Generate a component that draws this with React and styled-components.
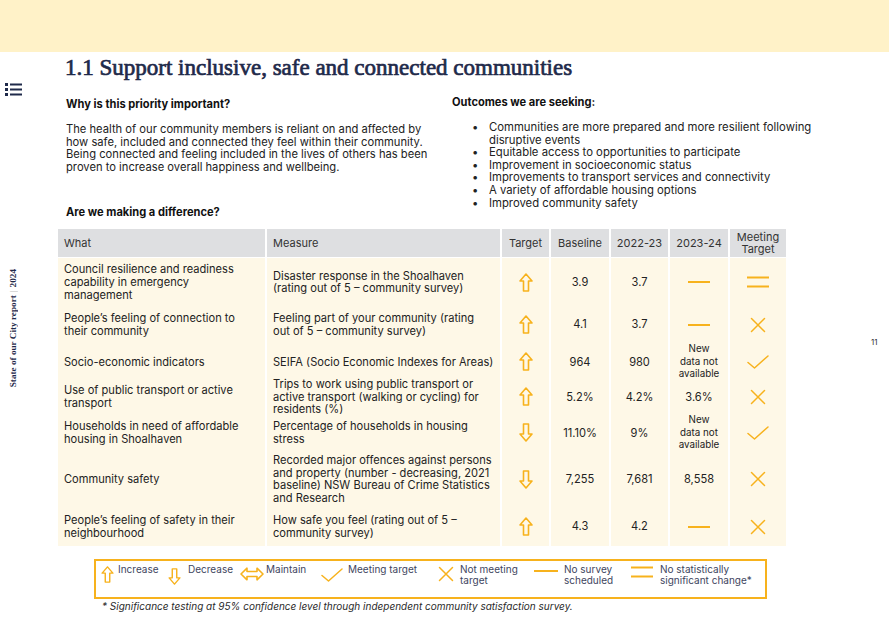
import React from 'react'
import styled, { createGlobalStyle } from 'styled-components'

const ORANGE = '#f7b21d'
const NAVY = '#1f2a4a'

const GlobalStyle = createGlobalStyle`
  body {
    margin: 0;
    background: #fff;
    font-family: Inter, 'Noto Sans', sans-serif;
    color: #222;
  }
`

const Page = styled.div`
  width: 889px;
  height: 628px;
  overflow: hidden;
  display: flex;
  flex-direction: column;
`

const Banner = styled.div`
  height: 52px;
  background: #fff2c8;
  flex-shrink: 0;
`

const Body = styled.div`
  display: grid;
  grid-template-columns: 58px 728px 1fr;
`

const Sidebar = styled.div`
  display: flex;
  flex-direction: column;
  align-items: flex-start;
  padding: 30px 0 0 5px;
`

const SideText = styled.div`
  writing-mode: vertical-rl;
  transform: rotate(180deg);
  margin-top: 172px;
  margin-left: 3px;
  font-family: 'Liberation Serif', serif;
  font-weight: 700;
  font-size: 9.2px;
  color: ${NAVY};
  white-space: nowrap;

  & > .sep {
    color: #b8b8b8;
    font-weight: 400;
    margin: 3px 0;
  }
`

const Aside = styled.div`
  padding: 285px 0 0 85px;
  font-size: 8px;
  color: #333;
`

const Main = styled.div`
  display: flex;
  flex-direction: column;
`

const Title = styled.h1`
  margin: 4px 0 0 7px;
  font-family: 'Liberation Serif', serif;
  font-weight: 400;
  font-size: 23px;
  line-height: 1;
  color: ${NAVY};
  -webkit-text-stroke: 0.7px ${NAVY};
`

const Intro = styled.div`
  display: grid;
  grid-template-columns: 394px 1fr;
  margin-top: 17px;
`

const Col = styled.div`
  padding-left: ${p => p.$left}px;
  padding-top: ${p => p.$top}px;
`

const Heading = styled.div`
  font-weight: 700;
  font-size: 11.1px;
  line-height: 13px;
  color: #111;
  margin-top: ${p => p.$mt || 0}px;
`

const Para = styled.p`
  margin: 12px 0 0;
  font-size: 11.2px;
  line-height: 12.7px;
  color: #222;
  white-space: nowrap;
`

const Bullets = styled.ul`
  list-style: none;
  margin: 12px 0 0;
  padding: 0 0 0 20px;
  font-size: 11.3px;
  line-height: 12.6px;
  color: #222;
  white-space: nowrap;
`

const Bullet = styled.li`
  display: flex;

  &::before {
    content: '•';
    width: 17px;
    flex-shrink: 0;
  }
`

const Table = styled.div`
  margin-top: 10px;
  display: flex;
  flex-direction: column;
  background: #fff;
`

const Row = styled.div`
  display: grid;
  grid-template-columns: 207px 233px 47px 58px 57px 58px 56px;
  column-gap: 2px;
  height: ${p => p.$h}px;
  margin-bottom: ${p => (p.$head ? 1 : 0)}px;
`

const HeadCell = styled.div`
  background: #dedfe1;
  display: flex;
  align-items: center;
  justify-content: ${p => (p.$center ? 'center' : 'flex-start')};
  text-align: ${p => (p.$center ? 'center' : 'left')};
  padding: 0 ${p => (p.$center ? 1 : 6)}px;
  font-size: 11px;
  line-height: 12px;
  color: #333;
  white-space: pre;
`

const Cell = styled.div`
  background: #fef8e7;
  display: flex;
  align-items: center;
  justify-content: ${p => (p.$center ? 'center' : 'flex-start')};
  text-align: ${p => (p.$center ? 'center' : 'left')};
  padding: 0 ${p => (p.$center ? 1 : 6)}px;
  font-size: ${p => (p.$small ? 9.8 : 11.1)}px;
  line-height: 12.7px;
  color: #222;
  white-space: pre;
`

const Legend = styled.div`
  margin: 13px 0 0 36px;
  width: 673px;
  height: 40px;
  box-sizing: border-box;
  border: 2px solid ${ORANGE};
  display: grid;
  grid-template-columns: 67px 73px 81px 117px 96px 97px 1fr;
  align-items: start;
  padding: 3px 0 0 4px;
`

const LegendItem = styled.div`
  display: flex;
  align-items: flex-start;
  gap: ${p => p.$gap || 3}px;
  font-size: 10px;
  line-height: 11px;
  color: #3e4560;
  white-space: pre;

  & > svg {
    flex-shrink: 0;
    margin-top: ${p => p.$iconTop || 0}px;
  }
`

const Footnote = styled.div`
  margin: 1px 0 0 44px;
  font-size: 10px;
  line-height: 12px;
  font-style: italic;
  color: #2a2a2a;
`

const stroke = { fill: 'none', stroke: ORANGE, strokeWidth: 1.6, strokeLinejoin: 'round', strokeLinecap: 'round' }

const ArrowUp = ({ w = 14, h = 19 }) => (
  <svg width={w} height={h} viewBox="0 0 14 19">
    <path d="M7 1 L13 8 L9.5 8 L9.5 18 L4.5 18 L4.5 8 L1 8 Z" {...stroke} />
  </svg>
)

const ArrowDown = ({ w = 14, h = 19 }) => (
  <svg width={w} height={h} viewBox="0 0 14 19">
    <path d="M7 18 L13 11 L9.5 11 L9.5 1 L4.5 1 L4.5 11 L1 11 Z" {...stroke} />
  </svg>
)

const ArrowBoth = () => (
  <svg width="24" height="14" viewBox="0 0 24 14">
    <path d="M1 7 L7 1.2 L7 4.5 L17 4.5 L17 1.2 L23 7 L17 12.8 L17 9.5 L7 9.5 L7 12.8 Z" {...stroke} />
  </svg>
)

const Dash = ({ w = 22 }) => (
  <svg width={w} height="4" viewBox={`0 0 ${w} 4`}>
    <line x1="0" y1="2" x2={w} y2="2" stroke={ORANGE} strokeWidth="2" />
  </svg>
)

const Equal = () => (
  <svg width="22" height="12" viewBox="0 0 22 12">
    <line x1="0" y1="1.5" x2="22" y2="1.5" stroke={ORANGE} strokeWidth="2" />
    <line x1="0" y1="10.5" x2="22" y2="10.5" stroke={ORANGE} strokeWidth="2" />
  </svg>
)

const Cross = () => (
  <svg width="16" height="16" viewBox="0 0 16 16">
    <path d="M1.5 1.5 L14.5 14.5 M14.5 1.5 L1.5 14.5" {...stroke} strokeWidth="1.5" />
  </svg>
)

const Check = () => (
  <svg width="22" height="14" viewBox="0 0 22 14">
    <path d="M1 7.5 L7.5 13 L21 1" {...stroke} strokeWidth="1.5" />
  </svg>
)

const ListIcon = () => (
  <svg width="17" height="15" viewBox="0 0 17 15">
    <g fill={NAVY}>
      <rect x="0" y="1" width="3" height="3" />
      <rect x="5" y="1.5" width="12" height="2" />
      <rect x="0" y="6" width="3" height="3" />
      <rect x="5" y="6.5" width="12" height="2" />
      <rect x="0" y="11" width="3" height="3" />
      <rect x="5" y="11.5" width="12" height="2" />
    </g>
  </svg>
)

const icons = {
  up: <ArrowUp />,
  down: <ArrowDown />,
  dash: <Dash />,
  equal: <Equal />,
  cross: <Cross />,
  check: <Check />,
}

const NA = 'New\ndata not\navailable'

const rows = [
  {
    h: 49,
    what: 'Council resilience and readiness\ncapability in emergency\nmanagement',
    measure: 'Disaster response in the Shoalhaven\n(rating out of 5 – community survey)',
    target: 'up', base: '3.9', y22: '3.7', y23: 'dash', meet: 'equal',
  },
  {
    h: 36,
    what: 'People’s feeling of connection to\ntheir community',
    measure: 'Feeling part of your community (rating\nout of 5 – community survey)',
    target: 'up', base: '4.1', y22: '3.7', y23: 'dash', meet: 'cross',
  },
  {
    h: 35,
    what: 'Socio-economic indicators',
    measure: 'SEIFA (Socio Economic Indexes for Areas)',
    target: 'up', base: '964', y22: '980', y23: NA, meet: 'check',
  },
  {
    h: 36,
    what: 'Use of public transport or active\ntransport',
    measure: 'Trips to work using public transport or\nactive transport (walking or cycling) for\nresidents (%)',
    target: 'up', base: '5.2%', y22: '4.2%', y23: '3.6%', meet: 'cross',
  },
  {
    h: 37,
    what: 'Households in need of affordable\nhousing in Shoalhaven',
    measure: 'Percentage of households in housing\nstress',
    target: 'down', base: '11.10%', y22: '9%', y23: NA, meet: 'check',
  },
  {
    h: 57,
    what: 'Community safety',
    measure: 'Recorded major offences against persons\nand property (number - decreasing, 2021\nbaseline) NSW Bureau of Crime Statistics\nand Research',
    target: 'down', base: '7,255', y22: '7,681', y23: '8,558', meet: 'cross',
  },
  {
    h: 38,
    what: 'People’s feeling of safety in their\nneighbourhood',
    measure: 'How safe you feel (rating out of 5 –\ncommunity survey)',
    target: 'up', base: '4.3', y22: '4.2', y23: 'dash', meet: 'cross',
  },
]

const outcomes = [
  <>Communities are more prepared and more resilient following<br />disruptive events</>,
  'Equitable access to opportunities to participate',
  'Improvement in socioeconomic status',
  'Improvements to transport services and connectivity',
  'A variety of affordable housing options',
  'Improved community safety',
]

const value = v => icons[v] || v

export default function App() {
  return (
    <Page>
      <GlobalStyle />
      <Banner />
      <Body>
        <Sidebar>
          <ListIcon />
          <SideText>
            State of our City report<span className="sep">|</span>2024
          </SideText>
        </Sidebar>

        <Main>
          <Title>1.1 Support inclusive, safe and connected communities</Title>

          <Intro>
            <Col $left={8} $top={2}>
              <Heading>Why is this priority important?</Heading>
              <Para>
                The health of our community members is reliant on and affected by<br />
                how safe, included and connected they feel within their community.<br />
                Being connected and feeling included in the lives of others has been<br />
                proven to increase overall happiness and wellbeing.
              </Para>
              <Heading $mt={32}>Are we making a difference?</Heading>
            </Col>
            <Col $left={0} $top={0}>
              <Heading>Outcomes we are seeking:</Heading>
              <Bullets>
                {outcomes.map((o, i) => (
                  <Bullet key={i}>
                    <span>{o}</span>
                  </Bullet>
                ))}
              </Bullets>
            </Col>
          </Intro>

          <Table>
            <Row $h={28} $head>
              <HeadCell>What</HeadCell>
              <HeadCell>Measure</HeadCell>
              <HeadCell $center>Target</HeadCell>
              <HeadCell $center>Baseline</HeadCell>
              <HeadCell $center>2022-23</HeadCell>
              <HeadCell $center>2023-24</HeadCell>
              <HeadCell $center>{'Meeting\nTarget'}</HeadCell>
            </Row>
            {rows.map(r => (
              <Row key={r.what} $h={r.h}>
                <Cell>{r.what}</Cell>
                <Cell>{r.measure}</Cell>
                <Cell $center>{value(r.target)}</Cell>
                <Cell $center>{r.base}</Cell>
                <Cell $center>{r.y22}</Cell>
                <Cell $center $small={r.y23 === NA}>{value(r.y23)}</Cell>
                <Cell $center>{value(r.meet)}</Cell>
              </Row>
            ))}
          </Table>

          <Legend>
            <LegendItem $iconTop={2}>
              <ArrowUp w={15} h={17} />
              Increase
            </LegendItem>
            <LegendItem $gap={6} $iconTop={4}>
              <ArrowDown w={15} h={17} />
              Decrease
            </LegendItem>
            <LegendItem $gap={2} $iconTop={3}>
              <ArrowBoth />
              Maintain
            </LegendItem>
            <LegendItem $gap={5} $iconTop={4}>
              <Check />
              Meeting target
            </LegendItem>
            <LegendItem $gap={6} $iconTop={2}>
              <Cross />
              {'Not meeting\ntarget'}
            </LegendItem>
            <LegendItem $gap={6} $iconTop={5}>
              <Dash w={24} />
              {'No survey\nscheduled'}
            </LegendItem>
            <LegendItem $gap={7} $iconTop={2}>
              <Equal />
              {'No statistically\nsignificant change*'}
            </LegendItem>
          </Legend>
          <Footnote>
            * Significance testing at 95% confidence level through independent community satisfaction survey.
          </Footnote>
        </Main>

        <Aside>11</Aside>
      </Body>
    </Page>
  )
}
